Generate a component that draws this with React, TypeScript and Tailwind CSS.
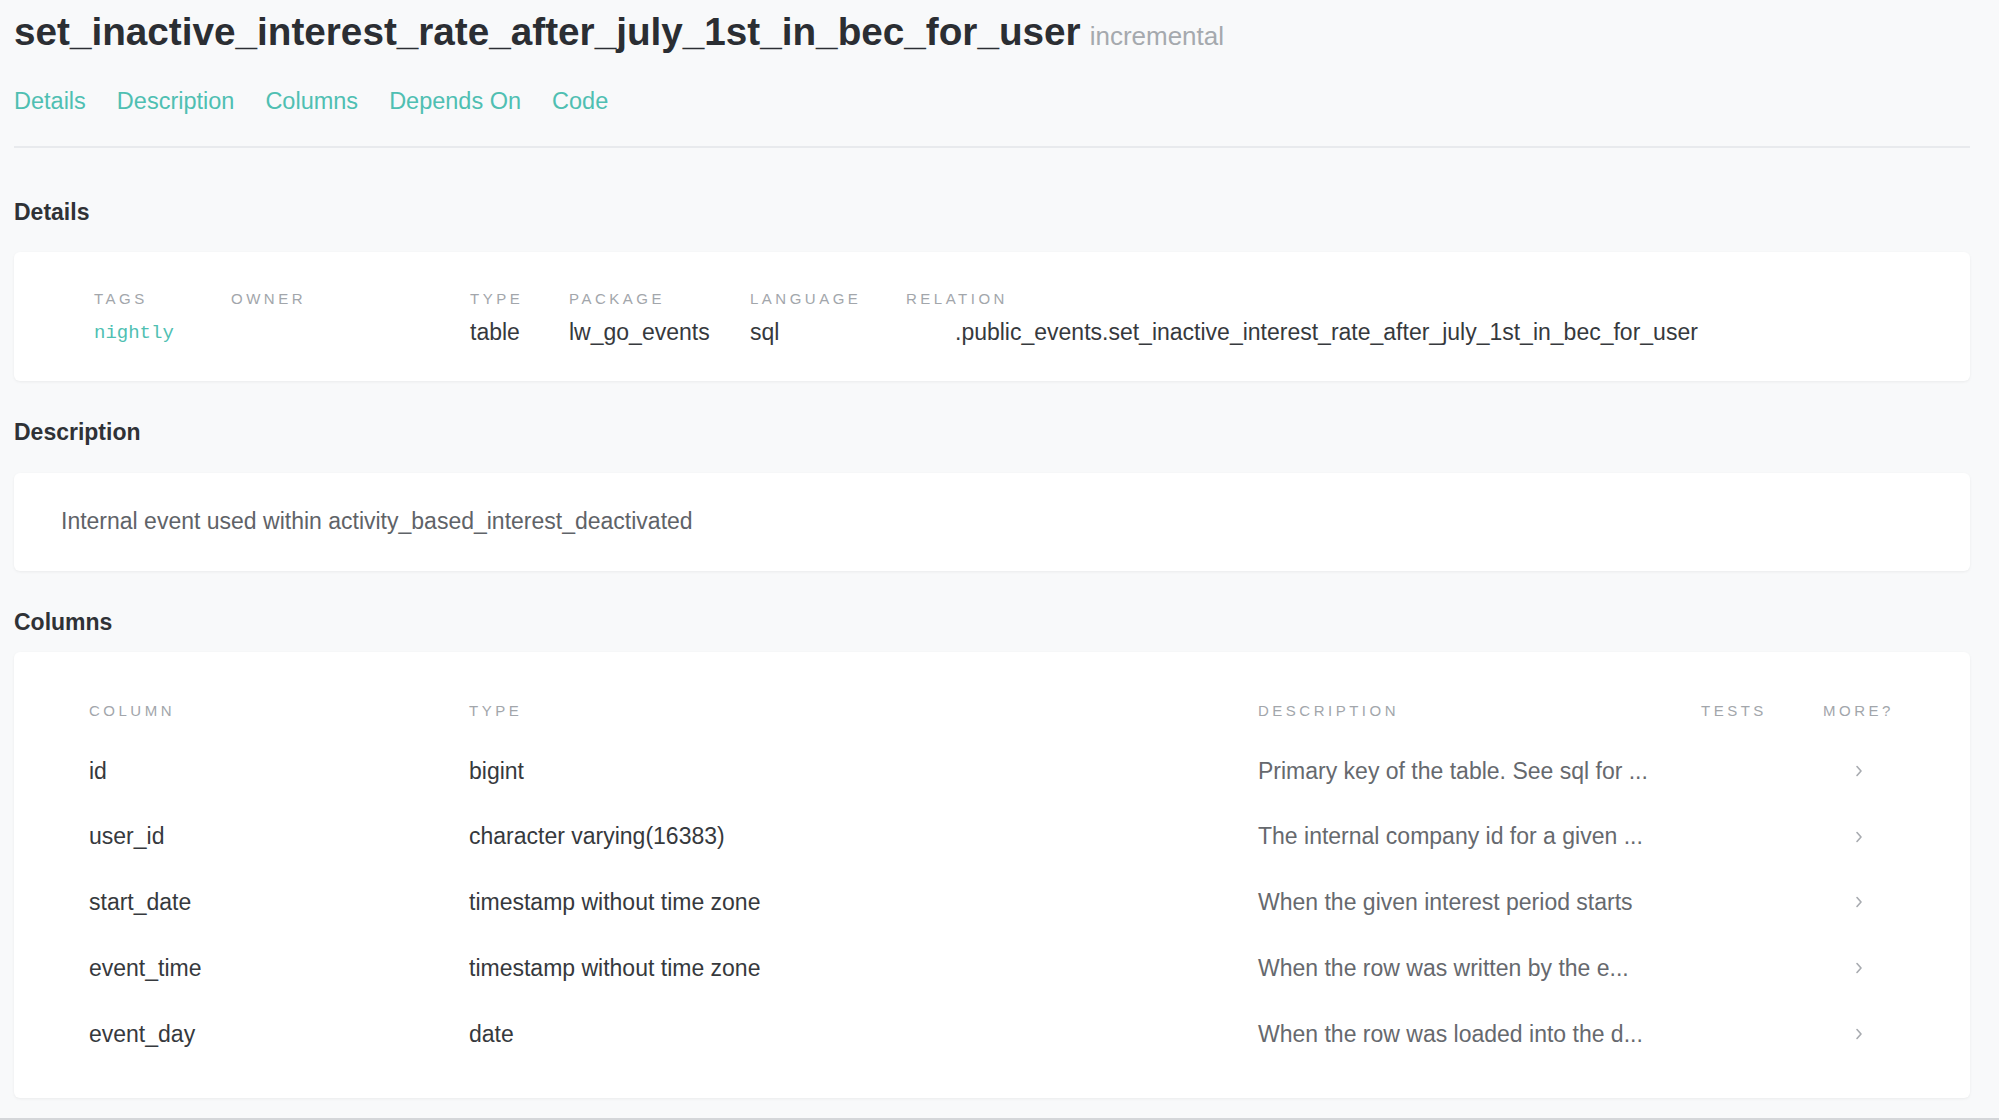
import { Fragment } from 'react';

const columns = [
  { name: 'id', type: 'bigint', description: 'Primary key of the table. See sql for ...' },
  { name: 'user_id', type: 'character varying(16383)', description: 'The internal company id for a given ...' },
  { name: 'start_date', type: 'timestamp without time zone', description: 'When the given interest period starts' },
  { name: 'event_time', type: 'timestamp without time zone', description: 'When the row was written by the e...' },
  { name: 'event_day', type: 'date', description: 'When the row was loaded into the d...' },
];

const tabs = ['Details', 'Description', 'Columns', 'Depends On', 'Code'];

function Label({ children }: { children: React.ReactNode }) {
  return (
    <div className="h-[20px] leading-[20px] text-[15px] tracking-[3.5px] text-[#a2a6ab] uppercase whitespace-nowrap">
      {children}
    </div>
  );
}

function Chevron() {
  return (
    <svg width="8" height="12" viewBox="0 0 8 12" fill="none" xmlns="http://www.w3.org/2000/svg">
      <path d="M2 1.5l4 4.5-4 4.5" stroke="#a8abb0" strokeWidth="1.6" strokeLinecap="round" strokeLinejoin="round" />
    </svg>
  );
}

export default function App() {
  return (
    <div className="h-[1120px] overflow-hidden bg-[#f8f9fa] border-b-2 border-[#d4d6d9] font-['Liberation_Sans',Arial,sans-serif]">
      <div className="pl-[14px] pr-[29px] pt-[8px]">
        {/* title */}
        <div className="flex items-baseline h-[48px] leading-[48px]">
          <h1 className="text-[38.7px] font-bold text-[#2b2e33]">
            set_inactive_interest_rate_after_july_1st_in_bec_for_user
          </h1>
          <span className="ml-[9px] text-[26px] text-[#a5a9ae]">incremental</span>
        </div>

        {/* tabs */}
        <div className="mt-[31px] flex gap-[31px] h-[28px] leading-[28px] text-[23.5px] text-[#4fbfb2]">
          {tabs.map(t => (
            <a key={t} className="cursor-pointer">{t}</a>
          ))}
        </div>

        <div className="mt-[31px] border-t-2 border-[#e8eaed]" />

        {/* details */}
        <h2 className="mt-[49px] h-[30px] leading-[30px] text-[23px] font-bold text-[#2f3236]">Details</h2>
        <div className="mt-[25px] bg-white rounded-[6px] shadow-[0_1px_3px_rgba(0,0,0,0.06)] pl-[80px] pt-[37px] pb-[34px] flex">
          <div className="w-[137px]">
            <Label>Tags</Label>
            <div className="mt-[10px] h-[28px] leading-[28px] text-[19px] text-[#4fbfb2] font-['Liberation_Mono',monospace]">nightly</div>
          </div>
          <div className="w-[239px]">
            <Label>Owner</Label>
          </div>
          <div className="w-[99px]">
            <Label>Type</Label>
            <div className="mt-[9px] h-[28px] leading-[28px] text-[23px] text-[#36393d]">table</div>
          </div>
          <div className="w-[181px]">
            <Label>Package</Label>
            <div className="mt-[9px] h-[28px] leading-[28px] text-[23px] text-[#36393d]">lw_go_events</div>
          </div>
          <div className="w-[156px]">
            <Label>Language</Label>
            <div className="mt-[9px] h-[28px] leading-[28px] text-[23px] text-[#36393d]">sql</div>
          </div>
          <div>
            <Label>Relation</Label>
            <div className="mt-[9px] h-[28px] leading-[28px] text-[23px] text-[#36393d] pl-[49px] whitespace-nowrap">
              .public_events.set_inactive_interest_rate_after_july_1st_in_bec_for_user
            </div>
          </div>
        </div>

        {/* description */}
        <h2 className="mt-[36px] h-[30px] leading-[30px] text-[23px] font-bold text-[#2f3236]">Description</h2>
        <div className="mt-[26px] bg-white rounded-[6px] shadow-[0_1px_3px_rgba(0,0,0,0.06)] pl-[47px] pt-[34px] pb-[36px]">
          <p className="h-[28px] leading-[28px] text-[23px] text-[#5f6368]">
            Internal event used within activity_based_interest_deactivated
          </p>
        </div>

        {/* columns */}
        <h2 className="mt-[36px] h-[30px] leading-[30px] text-[23px] font-bold text-[#2f3236]">Columns</h2>
        <div className="mt-[15px] bg-white rounded-[6px] shadow-[0_1px_3px_rgba(0,0,0,0.06)] pl-[75px] pt-[49px] pb-[31px]">
          <div className="grid grid-cols-[380px_789px_443px_122px_71px] items-center">
            <Label>Column</Label>
            <Label>Type</Label>
            <Label>Description</Label>
            <Label>Tests</Label>
            <Label>More?</Label>
            <div className="col-span-5 h-[17px]" />
            {columns.map(c => (
              <Fragment key={c.name}>
                <div className="h-[65.75px] flex items-center text-[23px] text-[#36393d]">{c.name}</div>
                <div className="h-[65.75px] flex items-center text-[23px] text-[#36393d]">{c.type}</div>
                <div className="h-[65.75px] flex items-center text-[23px] text-[#66696e] whitespace-nowrap">{c.description}</div>
                <div className="h-[65.75px]" />
                <div className="h-[65.75px] flex items-center justify-center">
                  <Chevron />
                </div>
              </Fragment>
            ))}
          </div>
        </div>
      </div>
    </div>
  );
}
